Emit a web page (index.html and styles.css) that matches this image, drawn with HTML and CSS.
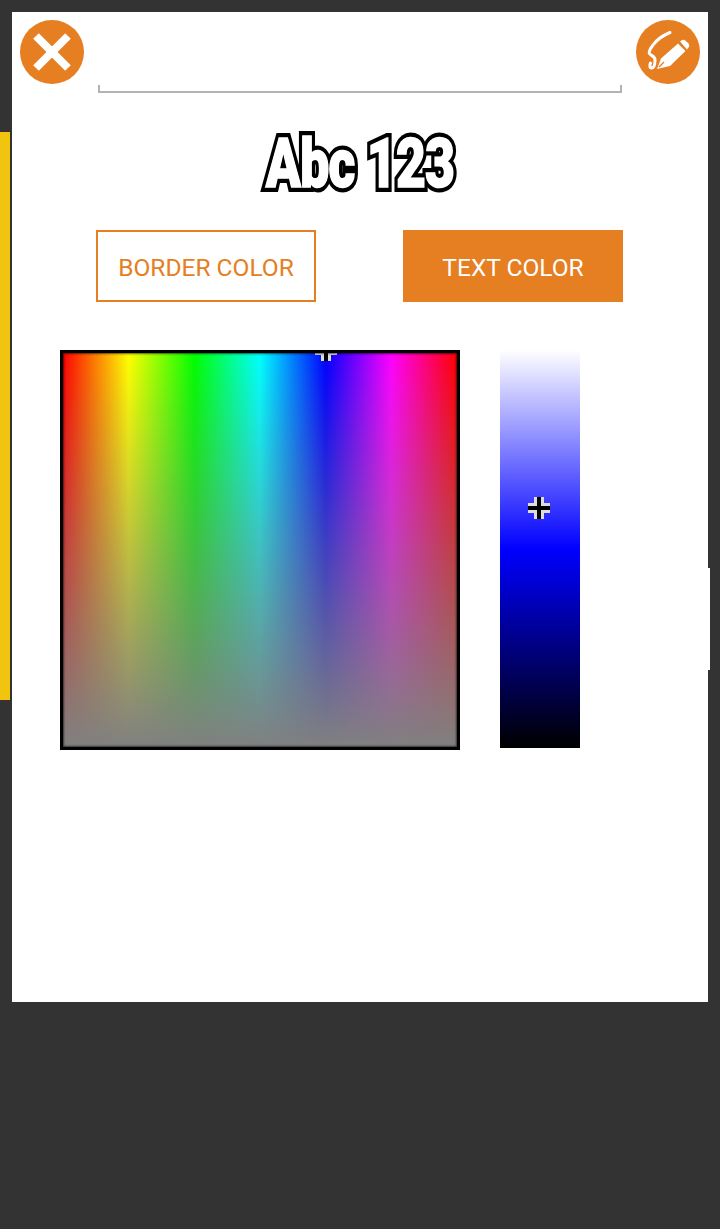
FILE: index.html
```html
<!DOCTYPE html>
<html lang="en">
<head>
    <meta charset="UTF-8">
    <meta name="viewport" content="width=device-width, initial-scale=1.0">
    <title>Text Color</title>
    <link rel="stylesheet" href="styles.css">
</head>
<body>
    <div class="side-tab"></div>
    <div class="edge-tab"></div>
    <div class="panel">
        <button class="round-btn close-btn">
            <svg viewBox="0 0 64 64" width="64" height="64">
                <path d="M16 16L48 48M48 16L16 48" stroke="#fff" stroke-width="8" fill="none"/>
            </svg>
        </button>
        <button class="round-btn edit-btn">
            <svg viewBox="0 0 64 64" width="64" height="64">
                <path d="M34 12.5C28 15 22 18 17 25C14 29 12.5 32 13.5 33.5C15 36 19 36 19 40C19 44 18.5 48 15.5 48C13.5 48 13.5 45 14.5 43" stroke="#fff" stroke-width="3" stroke-linecap="round" stroke-linejoin="round" fill="none"/>
                <path d="M21 49L25 38.5L42 23.5L49.5 31L34 46Z" fill="#fff"/>
                <path d="M23 47L28 42" stroke="#e67e22" stroke-width="1.2"/>
                <path d="M44 21.5L46 20Q48 19 50 21L52.5 23.5Q54 25.5 52.5 27.5L51 29.5Z" fill="#fff"/>
            </svg>
        </button>

        <div class="text-input"></div>
        <div class="preview" data-text="Abc 123">Abc 123</div>

        <div class="tabs">
            <button class="tab">BORDER COLOR</button>
            <button class="tab active">TEXT COLOR</button>
        </div>

        <div class="picker">
            <div class="hue-box">
                <div class="cross cross-hue"></div>
            </div>
            <div class="shade-bar">
                <div class="cross cross-shade"></div>
            </div>
        </div>
    </div>
</body>
</html>
```

FILE: styles.css
```css
html, body {
    margin: 0;
    height: 100%;
}
body {
    position: relative;
    background-color: #333;
    padding: 12px;
    box-sizing: border-box;
    height: 1229px;
    overflow: hidden;
    font-family: Roboto, sans-serif;
}
.side-tab {
    position: absolute;
    left: 0;
    top: 132px;
    width: 10px;
    height: 568px;
    background-color: #f1c40f;
}
.edge-tab {
    position: absolute;
    left: 706px;
    top: 568px;
    width: 4px;
    height: 102px;
    background-color: #fff;
}
.panel {
    position: relative;
    height: 990px;
    background-color: #fff;
    display: flex;
    flex-direction: column;
}
.round-btn {
    position: absolute;
    top: 8px;
    width: 64px;
    height: 64px;
    padding: 0;
    border: none;
    border-radius: 50%;
    background-color: #e67e22;
}
.round-btn svg {
    display: block;
}
.close-btn {
    left: 8px;
}
.edit-btn {
    right: 8px;
}
.text-input {
    box-sizing: border-box;
    width: 524px;
    height: 8px;
    margin: 73px auto 0;
    border: 2px solid #b3b3b3;
    border-top: none;
}
.preview {
    position: relative;
    margin-top: 38px;
    height: 66px;
    line-height: 66px;
    text-align: center;
    font-family: Roboto, sans-serif;
    font-weight: 900;
    font-size: 68px;
    letter-spacing: -1px;
    color: #fff;
    -webkit-text-stroke: 10px #000;
    paint-order: stroke fill;
    transform: scaleX(0.76);
}
/* second layer fattens the white fill, no Impact-style font here */
.preview::after {
    content: attr(data-text);
    position: absolute;
    left: 0;
    right: 0;
    top: 0;
    -webkit-text-stroke: 1.5px #fff;
}
.tabs {
    display: flex;
    justify-content: space-between;
    width: 527px;
    margin: 33px 0 0 84px;
}
.tab {
    box-sizing: border-box;
    width: 220px;
    height: 72px;
    padding: 2px 0 0;
    font-family: Roboto, sans-serif;
    font-size: 24.5px;
    color: #e67e22;
    background-color: #fff;
    border: 2px solid #e67e22;
    border-radius: 0;
}
.tab.active {
    color: #fff;
    background-color: #e67e22;
}
.picker {
    display: flex;
    gap: 40px;
    margin: 48px 0 0 48px;
}
.hue-box {
    position: relative;
    box-sizing: border-box;
    width: 400px;
    height: 400px;
    border: 3px solid #000;
    background:
        linear-gradient(to bottom, rgba(128, 128, 128, 0), #808080),
        linear-gradient(to right, #f00, #ff0, #0f0, #0ff, #00f, #f0f, #f00);
    overflow: hidden;
}
/* soft dark rim inside the black frame */
.hue-box::after {
    content: "";
    position: absolute;
    inset: 0;
    box-shadow: inset 0 0 2px 1px rgba(0, 0, 0, 0.6);
}
.shade-bar {
    position: relative;
    width: 80px;
    height: 398px;
    background: linear-gradient(to bottom, #fff, #00f 50%, #000);
}
/* plus marker: black bars with a pale outline */
.cross {
    position: absolute;
    width: 22px;
    height: 22px;
    filter: blur(0.4px);
    background:
        linear-gradient(#000, #000) center / 4px 22px no-repeat,
        linear-gradient(#000, #000) center / 22px 4px no-repeat,
        linear-gradient(#ddd, #ddd) center / 10px 22px no-repeat,
        linear-gradient(#ddd, #ddd) center / 22px 10px no-repeat;
}
.cross-hue {
    left: 252px;
    top: -14px;
}
.cross-shade {
    left: 28px;
    top: 147px;
}
```
